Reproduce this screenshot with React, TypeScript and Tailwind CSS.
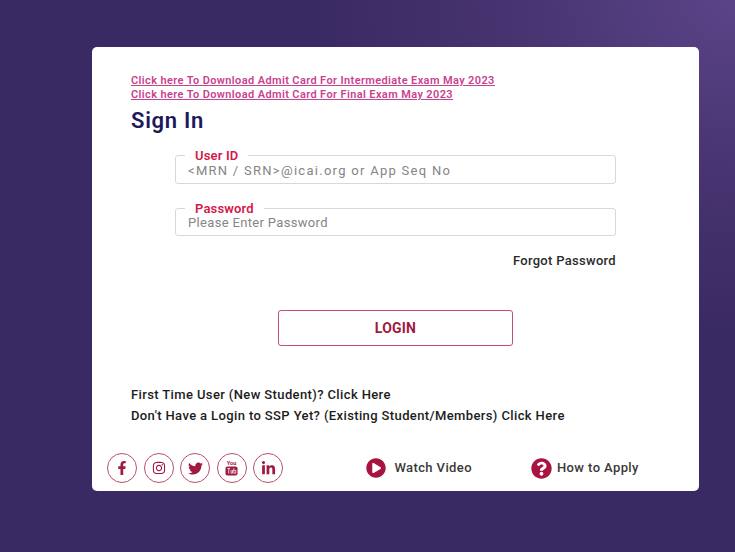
import { FaFacebookF, FaInstagram, FaTwitter, FaLinkedinIn, FaQuestionCircle, FaPlayCircle } from 'react-icons/fa';

// Old-style stacked "You / Tube" mark
function YoutubeMark() {
  return (
    <svg viewBox="0 0 14 17" width="13" height="16" fill="currentColor">
      <text x="7" y="5.5" textAnchor="middle" fontSize="6" fontWeight="700" fontFamily="Roboto, sans-serif">You</text>
      <rect x="0.5" y="7" width="13" height="9.5" rx="2" />
      <path d="M2.5 9h3M4 9v5.5M6.5 10.5v3.6h1.6v-3.6M9.5 8.8v5.3M9.5 11h2.2v3.1H9.5" fill="none" stroke="#fff" strokeWidth="0.8" />
    </svg>
  );
}

const socials = [
  { name: 'facebook', icon: <FaFacebookF className="text-[14px]" /> },
  { name: 'instagram', icon: <FaInstagram className="text-[14px]" /> },
  { name: 'twitter', icon: <FaTwitter className="text-[15px]" /> },
  { name: 'youtube', icon: <YoutubeMark /> },
  { name: 'linkedin', icon: <FaLinkedinIn className="text-[15px]" /> },
];

export default function App() {
  return (
    <div className="h-[552px] w-[735px] overflow-hidden bg-[radial-gradient(ellipse_420px_330px_at_100%_0%,#5b4488_0%,#46336f_55%,#3a2a63_100%)] pl-[92px] pt-[47px] font-['Roboto',sans-serif]">
      <div className="flex h-[444px] w-[607px] flex-col rounded-[5px] bg-white pl-[39px]">
        <div className="mt-[27px] flex flex-col text-[11px] font-semibold leading-[13px] tracking-[0.38px] text-[#c9428f] underline">
          <a>Click here To Download Admit Card For Intermediate Exam May 2023</a>
          <a className="mt-[1px]">Click here To Download Admit Card For Final Exam May 2023</a>
        </div>

        <h1 className="mt-[6px] text-[22px] font-semibold leading-[28px] tracking-[0.7px] text-[#1b1a5c]">Sign In</h1>

        <div className="ml-[44px] mt-[20px] flex w-[441px] flex-col">
          <div className="relative flex h-[29px] items-center rounded-[3px] border border-[#d8d8d8] pl-[12px] text-[13px] tracking-[1.28px] text-[#858585]">
            <span className="absolute -top-[7px] left-[9px] bg-white px-[10px] text-[13px] font-semibold leading-[14px] tracking-[0.15px] text-[#d21a4a]">User ID</span>
            <span className="mt-[2px] leading-[12px]">&lt;MRN / SRN&gt;@icai.org or App Seq No</span>
          </div>
          <div className="relative mt-[24px] flex h-[28px] items-center rounded-[3px] border border-[#d8d8d8] pl-[12px] text-[13px] tracking-[0.33px] text-[#858585]">
            <span className="absolute -top-[7px] left-[9px] bg-white px-[10px] text-[13px] font-semibold leading-[14px] tracking-[0.15px] text-[#d21a4a]">Password</span>
            <span className="mt-[1px] leading-[12px]">Please Enter Password</span>
          </div>
          <a className="mt-[17px] self-end text-[13px] font-medium leading-[16px] tracking-[0.3px] text-[#2b2b2b]">Forgot Password</a>
        </div>

        <button className="ml-[147px] mt-[41px] h-[36px] w-[235px] rounded-[3px] border border-[#c2506f] text-[14px] font-bold tracking-[0.2px] text-[#a01a40]">LOGIN</button>

        <div className="mt-[42px] flex flex-col gap-[8px] text-[13px] font-medium tracking-[0.38px] text-[#1c1c1c]">
          <a className="h-[13px] leading-[13px]">First Time User (New Student)? Click Here</a>
          <a className="h-[13px] leading-[13px]">Don't Have a Login to SSP Yet? (Existing Student/Members) Click Here</a>
        </div>

        <div className="-ml-[24px] mt-[31px] flex items-center">
          <div className="flex gap-[6.6px]">
            {socials.map(({ name, icon }) => (
              <a key={name} className="flex h-[30px] w-[30px] items-center justify-center rounded-full border border-[#b8506e] text-[#a01a40]">
                {icon}
              </a>
            ))}
          </div>
          <a className="ml-[83px] flex items-center gap-[8px] text-[13px] font-medium tracking-[0.4px] text-[#3a3a3a]">
            <FaPlayCircle className="text-[20px] text-[#a8143f]" />
            Watch Video
          </a>
          <a className="ml-[59px] flex items-center gap-[5px] text-[13px] font-medium tracking-[0.4px] text-[#3a3a3a]">
            <FaQuestionCircle className="text-[21px] text-[#a8143f]" />
            How to Apply
          </a>
        </div>
      </div>
    </div>
  );
}
